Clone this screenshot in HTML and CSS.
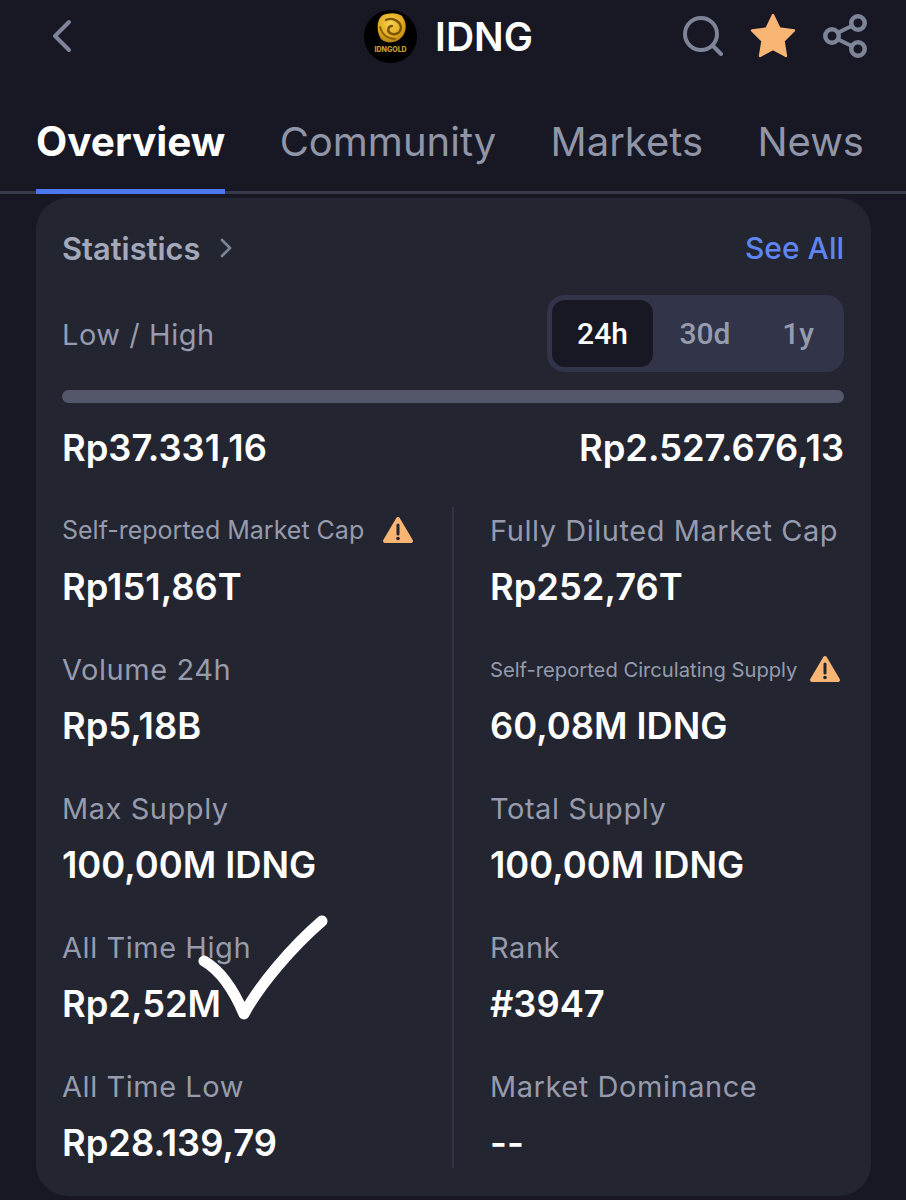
FILE: index.html

```html
<!DOCTYPE html>
<html lang="en">
<head>
    <meta charset="UTF-8">
    <meta name="viewport" content="width=device-width, initial-scale=1.0">
    <title>IDNG</title>
    <link rel="stylesheet" href="styles.css">
</head>
<body>
    <div class="top-bar">
        <svg class="back-icon" width="24" height="36" viewBox="0 0 24 36">
            <path d="M19 4 L5 18 L19 32" fill="none" stroke="#7f8599" stroke-width="4" stroke-linecap="round" stroke-linejoin="round"/>
        </svg>
        <div class="coin">
            <div class="coin-logo">
                <svg class="coin-gold" width="32" height="31" viewBox="0 0 32 31">
                    <defs>
                        <radialGradient id="gold" cx="45%" cy="35%" r="70%">
                            <stop offset="0" stop-color="#f7d44c"/>
                            <stop offset="0.65" stop-color="#e0a71f"/>
                            <stop offset="1" stop-color="#a8740e"/>
                        </radialGradient>
                    </defs>
                    <path d="M8 2 C13 0 22 -1 27 3 C31 8 32 15 29 21 C25 29 14 32 7 27 C2 22 0 7 8 2 Z" fill="url(#gold)"/>
                    <path d="M11 7 C17 4 25 8 26 14 C26 20 20 23 15 20 C12 18 13 13 17 13" fill="none" stroke="#7a5206" stroke-width="2.4" stroke-linecap="round"/>
                    <path d="M5 14 C7 21 12 26 20 26" fill="none" stroke="#8a6008" stroke-width="1.8" stroke-linecap="round"/>
                </svg>
                <span class="coin-tag">IDNGOLD</span>
            </div>
            <span class="coin-name">IDNG</span>
        </div>
        <div class="top-actions">
            <svg width="40" height="40" viewBox="0 0 40 40">
                <circle cx="18" cy="18" r="16" fill="none" stroke="#7f8599" stroke-width="4"/>
                <path d="M30 30 L38 38" stroke="#7f8599" stroke-width="4" stroke-linecap="round"/>
            </svg>
            <svg width="46" height="46" viewBox="0 0 46 46">
                <path d="M23 2 L29.5 15.5 L44 17.5 L33.5 28 L36 43 L23 36 L10 43 L12.5 28 L2 17.5 L16.5 15.5 Z" fill="#f9b574" stroke="#f9b574" stroke-width="2.4" stroke-linejoin="round"/>
            </svg>
            <svg width="44" height="44" viewBox="0 0 44 44">
                <path d="M8 22 L35 9 M8 22 L35 35" stroke="#7f8599" stroke-width="4"/>
                <circle cx="9" cy="22" r="6.75" fill="#171824" stroke="#7f8599" stroke-width="4.5"/>
                <circle cx="35" cy="9" r="6.75" fill="#171824" stroke="#7f8599" stroke-width="4.5"/>
                <circle cx="35" cy="35" r="6.75" fill="#171824" stroke="#7f8599" stroke-width="4.5"/>
            </svg>
        </div>
    </div>

    <div class="tabs">
        <div class="tab active">Overview</div>
        <div class="tab">Community</div>
        <div class="tab">Markets</div>
        <div class="tab">News</div>
    </div>

    <div class="card">
        <div class="card-head">
            <div class="card-title">
                Statistics
                <svg width="14" height="22" viewBox="0 0 14 22">
                    <path d="M3 3 L11 11 L3 19" fill="none" stroke="#7f8599" stroke-width="2.6" stroke-linecap="round" stroke-linejoin="round"/>
                </svg>
            </div>
            <a class="see-all">See All</a>
        </div>

        <div class="range-head">
            <span class="label">Low / High</span>
            <div class="switch">
                <button class="active">24h</button>
                <button class="mid">30d</button>
                <button>1y</button>
            </div>
        </div>

        <div class="range-bar"></div>
        <div class="range-values">
            <span class="value">Rp37.331,16</span>
            <span class="value">Rp2.527.676,13</span>
        </div>

        <div class="stats">
            <div class="stats-col">
                <div class="stat">
                    <div class="label small">Self-reported Market Cap
                        <svg class="warn" width="32" height="28" viewBox="0 0 32 28"><use href="#warn-icon"/></svg>
                    </div>
                    <div class="value">Rp151,86T</div>
                </div>
                <div class="stat">
                    <div class="label">Volume 24h</div>
                    <div class="value">Rp5,18B</div>
                </div>
                <div class="stat">
                    <div class="label">Max Supply</div>
                    <div class="value">100,00M IDNG</div>
                </div>
                <div class="stat">
                    <div class="label">All Time High</div>
                    <div class="value">Rp2,52M</div>
                </div>
                <div class="stat">
                    <div class="label">All Time Low</div>
                    <div class="value">Rp28.139,79</div>
                </div>
            </div>
            <div class="stats-col right">
                <div class="stat">
                    <div class="label">Fully Diluted Market Cap</div>
                    <div class="value">Rp252,76T</div>
                </div>
                <div class="stat">
                    <div class="label tiny">Self-reported Circulating Supply
                        <svg class="warn" width="32" height="28" viewBox="0 0 32 28"><use href="#warn-icon"/></svg>
                    </div>
                    <div class="value">60,08M IDNG</div>
                </div>
                <div class="stat">
                    <div class="label">Total Supply</div>
                    <div class="value">100,00M IDNG</div>
                </div>
                <div class="stat">
                    <div class="label">Rank</div>
                    <div class="value">#3947</div>
                </div>
                <div class="stat">
                    <div class="label">Market Dominance</div>
                    <div class="value">--</div>
                </div>
            </div>
        </div>
    </div>

    <!-- hand drawn tick on top of the screenshot -->
    <svg class="tick" width="140" height="115" viewBox="0 0 140 115">
        <path d="M6 47 C20 55 34 72 46 100 C62 70 95 32 124 7" fill="none" stroke="#fff" stroke-width="11" stroke-linecap="round" stroke-linejoin="round"/>
    </svg>

    <svg class="defs" width="0" height="0">
        <symbol id="warn-icon" viewBox="0 0 32 28">
            <path d="M16 3 L29 25 L3 25 Z" fill="#f9b574" stroke="#f9b574" stroke-width="4" stroke-linejoin="round"/>
            <path d="M16 9 L16 18" stroke="#232531" stroke-width="3" stroke-linecap="round"/>
            <circle cx="16" cy="22.5" r="1.8" fill="#232531"/>
        </symbol>
    </svg>
</body>
</html>
```

FILE: styles.css

```css
* {
    padding: 0;
    margin: 0;
    box-sizing: border-box;
}
body {
    position: relative;
    width: 906px;
    height: 1200px;
    overflow: hidden;
    background-color: #171824;
    font-family: "Inter", sans-serif;
    color: #fff;
}
.top-bar {
    height: 72px;
    padding: 0 39px 0 50px;
    display: flex;
    align-items: center;
    justify-content: space-between;
}
.back-icon {
    display: block;
}
.coin {
    display: flex;
    align-items: center;
    gap: 18px;
    margin-left: 140px;
}
.coin-logo {
    width: 53px;
    height: 53px;
    border-radius: 50%;
    background-color: #000;
    display: flex;
    flex-direction: column;
    align-items: center;
    padding-top: 3px;
}
.coin-tag {
    margin-top: 2px;
    font-size: 7px;
    font-weight: 800;
    color: #c9a030;
    line-height: 8px;
}
.coin-name {
    font-size: 39px;
    font-weight: 600;
}
.top-actions {
    display: flex;
    align-items: center;
    gap: 27px;
}
.tabs {
    height: 122px;
    padding: 0 42px 0 36px;
    display: flex;
    justify-content: space-between;
    border-bottom: 3px solid #373a4a;
}
.tab {
    height: 122px;
    padding-top: 45px;
    font-size: 40px;
    line-height: 50px;
    color: #9095a8;
}
.tab.active {
    font-size: 40.5px;
    color: #fff;
    font-weight: 700;
    border-bottom: 5px solid #4b78ee;
}
.card {
    width: 835px;
    height: 998px;
    margin: 4px 0 0 36px;
    padding: 30px 27px 0 26px;
    background-color: #232531;
    border-radius: 32px;
}
.card-head {
    display: flex;
    justify-content: space-between;
    align-items: center;
    height: 40px;
}
.card-title {
    display: flex;
    align-items: center;
    gap: 19px;
    font-size: 30.8px;
    font-weight: 600;
    color: #a3a8ba;
}
.see-all {
    font-size: 30px;
    font-weight: 500;
    color: #5f85f2;
}
.range-head {
    display: flex;
    justify-content: space-between;
    align-items: center;
    margin-top: 27px;
}
.range-head .label {
    margin-top: 2px;
}
.label {
    display: flex;
    align-items: center;
    gap: 18px;
    height: 40px;
    font-size: 29px;
    letter-spacing: 0.55px;
    color: #969bad;
    white-space: nowrap;
}
.label.small {
    font-size: 25px;
    letter-spacing: 0;
}
.label.tiny {
    font-size: 20.2px;
    letter-spacing: 0;
    gap: 12px;
}
.switch {
    width: 297px;
    height: 77px;
    padding: 5px;
    display: flex;
    background-color: #32354a;
    border-radius: 18px;
}
.switch button {
    flex: 1;
    border: 0;
    border-radius: 13px;
    background: transparent;
    font-family: "Roboto", sans-serif;
    font-size: 30px;
    font-weight: 500;
    color: #969bad;
}
.switch button.active {
    flex: none;
    width: 101px;
    background-color: #171824;
    color: #fff;
}
.switch button.mid {
    flex: none;
    width: 104px;
}
.range-bar {
    height: 13px;
    margin-top: 18px;
    border-radius: 7px;
    background-color: #535769;
}
.range-values {
    display: flex;
    justify-content: space-between;
    margin-top: 22px;
}
.value {
    font-size: 36.3px;
    font-weight: 600;
    line-height: 46px;
    color: #fff;
}
.stats {
    margin-top: 36px;
    display: flex;
}
.stats-col {
    width: 392px;
    height: 661px;
    display: flex;
    flex-direction: column;
    gap: 39px;
    padding-top: 3px;
    border-right: 2px solid #32354a;
}
.stats-col.right {
    width: auto;
    flex: 1;
    padding-left: 36px;
    border-right: 0;
}
.stat .value {
    margin-top: 14px;
}
.tick {
    position: absolute;
    left: 198px;
    top: 914px;
}
.defs {
    position: absolute;
}
```
